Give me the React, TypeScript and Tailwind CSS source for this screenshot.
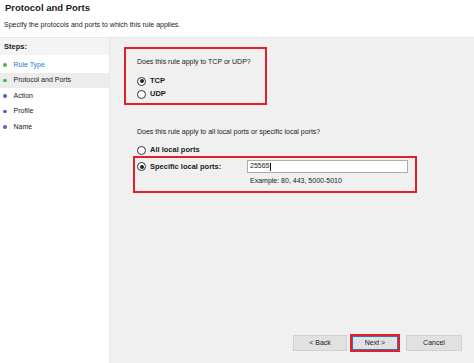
import React from "react";

const Radio = ({ checked }: { checked?: boolean }) => (
  <span className="w-[9px] h-[9px] rounded-full border border-[#333] bg-white flex items-center justify-center shrink-0">
    {checked && <span className="w-[4px] h-[4px] rounded-full bg-[#222]" />}
  </span>
);

const steps = [
  { label: "Rule Type", color: "bg-[#4caf50]", link: true },
  { label: "Protocol and Ports", color: "bg-[#4caf50]", selected: true },
  { label: "Action", color: "bg-[#5a5ec8]" },
  { label: "Profile", color: "bg-[#5a5ec8]" },
  { label: "Name", color: "bg-[#5a5ec8]" },
];

export default function App() {
  return (
    <div
      className="w-[474px] h-[363px] bg-white text-[#1a1a1a] flex flex-col overflow-hidden"
      style={{ fontFamily: '"Liberation Sans", Arial, sans-serif' }}
    >
      <div className="h-[38px] border-b border-[#e6e6e6] pl-[5px] shrink-0">
        <div className="text-[9.5px] font-bold leading-[12px] pt-[2px]">Protocol and Ports</div>
        <div className="text-[7px] leading-[10px] mt-[6px] ml-[-1px]">
          Specify the protocols and ports to which this rule applies.
        </div>
      </div>
      <div className="flex flex-1 min-h-0">
        <div className="w-[110px] border-r border-[#e6e6e6] bg-white shrink-0">
          <div className="h-[17px] bg-[#f4f4f4] text-[7.5px] font-bold pl-[4px] flex items-center">Steps:</div>
          <div className="pt-[2px]">
            {steps.map((s) => (
              <div
                key={s.label}
                className={`h-[15.5px] flex items-center pl-[3px] ${s.selected ? "bg-[#ececec]" : ""}`}
              >
                <span className={`w-[3.5px] h-[3.5px] rounded-full ${s.color}`} />
                <span
                  className={`ml-[7px] text-[7px] ${s.link ? "text-[#2a78d0]" : ""}`}
                >
                  {s.label}
                </span>
              </div>
            ))}
          </div>
        </div>
        <div className="flex-1 bg-[#f0f0f0] flex flex-col">
          <div className="mt-[9px] ml-[14px] w-[143px] h-[58px] border-2 border-[#e0202c] pl-[11px] pt-[8px]">
            <div className="text-[7px] leading-[10px]">Does this rule apply to TCP or UDP?</div>
            <div className="mt-[8px] h-[12px] flex items-center gap-[4px]">
              <Radio checked />
              <span className="text-[7.5px] font-bold">TCP</span>
            </div>
            <div className="mt-[1px] h-[12px] flex items-center gap-[4px]">
              <Radio />
              <span className="text-[7.5px] font-bold">UDP</span>
            </div>
          </div>
          <div className="mt-[22px] ml-[27px] text-[7px] leading-[10px]">
            Does this rule apply to all local ports or specific local ports?
          </div>
          <div className="mt-[7px] ml-[27px] h-[12px] flex items-center gap-[4px]">
            <Radio />
            <span className="text-[7.5px] font-bold">All local ports</span>
          </div>
          <div className="ml-[23px] w-[284px] h-[37px] border-2 border-[#e0202c] pl-[2px] pt-[2px]">
            <div className="flex items-center">
              <div className="w-[110px] h-[13px] flex items-center gap-[4px]">
                <Radio checked />
                <span className="text-[7.5px] font-bold">Specific local ports:</span>
              </div>
              <div className="w-[161px] h-[13px] bg-white border border-[#abadb3] flex items-center pl-[2px] text-[7px]">
                25565
                <span className="w-px h-[8px] bg-[#111] ml-px" />
              </div>
            </div>
            <div className="ml-[113px] mt-[3px] text-[7px] leading-[10px]">Example: 80, 443, 5000-5010</div>
          </div>
          <div className="mt-auto mb-[11px] mr-[12px] flex justify-end items-center text-[7px]">
            <button className="w-[54px] h-[16px] bg-[#e1e1e1] border border-[#d0d0d0]">&lt; Back</button>
            <button className="ml-[3px] w-[50px] h-[18px] bg-[#e1e1e1] border-2 border-[#e0202c] outline outline-1 outline-[#3a6fb0] -outline-offset-3">
              Next &gt;
            </button>
            <button className="ml-[6px] w-[56px] h-[16px] bg-[#e1e1e1] border border-[#d0d0d0]">Cancel</button>
          </div>
        </div>
      </div>
    </div>
  );
}
